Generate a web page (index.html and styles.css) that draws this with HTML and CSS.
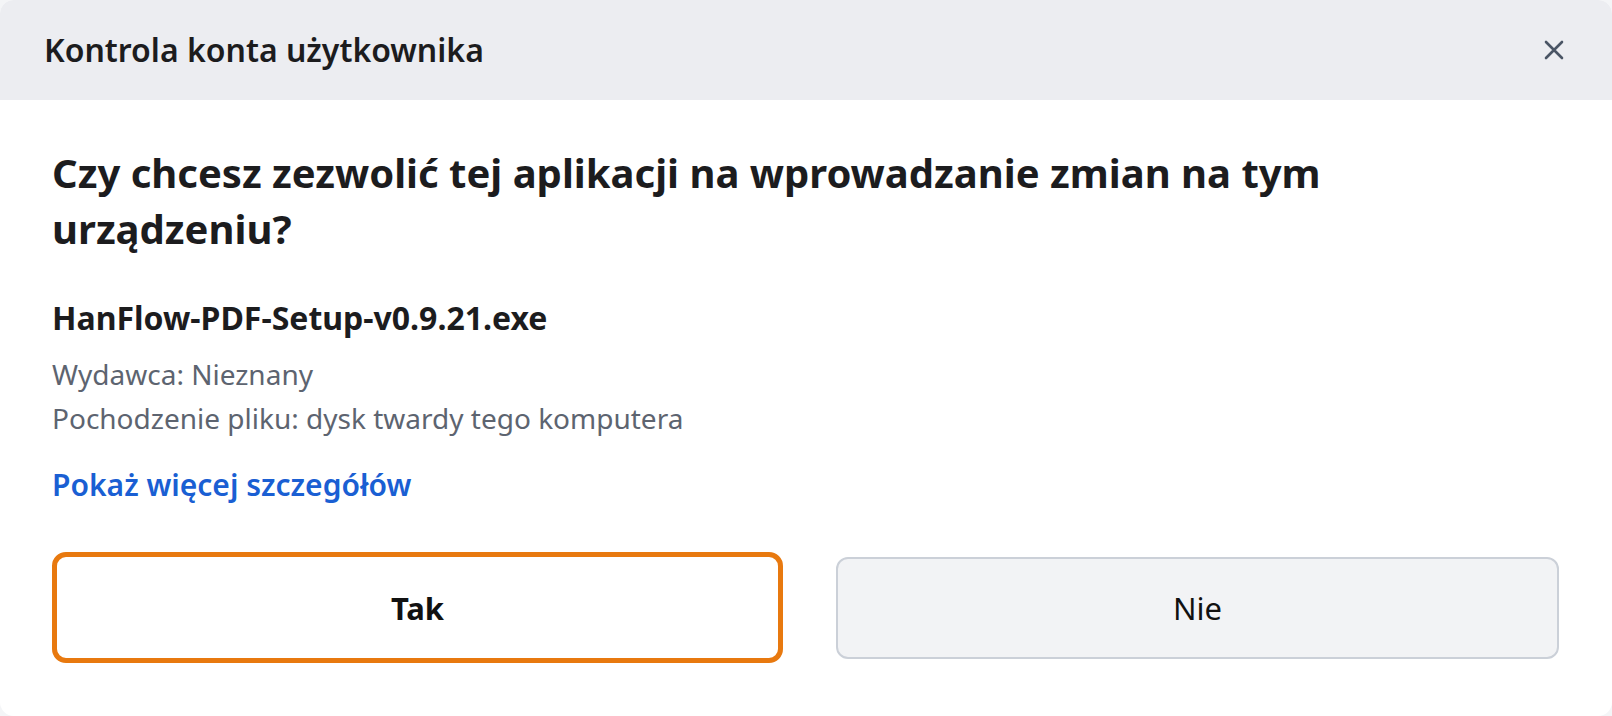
FILE: index.html
```html
<!DOCTYPE html>
<html lang="pl">
<head>
<meta charset="utf-8">
<title>Kontrola konta użytkownika</title>
<link rel="stylesheet" href="styles.css">
</head>
<body>
<div class="dialog">
  <header class="dialog-header">
    <h1 class="dialog-title">Kontrola konta użytkownika</h1>
    <button class="close-btn" aria-label="Zamknij">
      <svg width="20" height="20" viewBox="0 0 20 20"><path d="M2 2 L18 18 M18 2 L2 18" stroke="#4a5565" stroke-width="2.6" stroke-linecap="round" fill="none"/></svg>
    </button>
  </header>
  <main class="dialog-body">
    <h2 class="question">Czy chcesz zezwolić tej aplikacji na wprowadzanie zmian na tym urządzeniu?</h2>
    <div class="file-name">HanFlow-PDF-Setup-v0.9.21.exe</div>
    <div class="meta">
      <div>Wydawca: Nieznany</div>
      <div>Pochodzenie pliku: dysk twardy tego komputera</div>
    </div>
    <a class="details-link" href="#">Pokaż więcej szczegółów</a>
    <div class="actions">
      <button class="btn btn-yes">Tak</button>
      <button class="btn btn-no">Nie</button>
    </div>
  </main>
</div>
</body>
</html>
```

FILE: styles.css
```css
* { box-sizing: border-box; }
html, body { margin: 0; padding: 0; }
body {
  background: #f4f5f7;
  font-family: "Noto Sans", "Open Sans", sans-serif;
  color: #1c1c1e;
}
.dialog {
  width: 1612px;
  height: 716px;
  background: #ffffff;
  border-radius: 14px;
  overflow: hidden;
  display: flex;
  flex-direction: column;
}
.dialog-header {
  height: 100px;
  flex: 0 0 100px;
  background: #ecedf1;
  display: flex;
  align-items: center;
  justify-content: space-between;
  padding: 0 48px 0 44px;
}
.dialog-title {
  margin: 0;
  font-size: 32px;
  font-weight: 600;
  line-height: 44px;
  color: #1c1c1e;
}
.close-btn {
  background: none;
  border: 0;
  padding: 0;
  width: 20px;
  height: 20px;
  display: flex;
  cursor: pointer;
}
.dialog-body {
  padding: 45px 53px 0 52px;
  display: flex;
  flex-direction: column;
}
.question {
  margin: 0;
  max-width: 1360px;
  font-size: 40px;
  font-weight: 700;
  line-height: 56px;
  color: #1c1c1e;
}
.file-name {
  margin-top: 39px;
  font-size: 32px;
  font-weight: 700;
  line-height: 44px;
}
.meta {
  margin-top: 12px;
  font-size: 28px;
  line-height: 44px;
  color: #5d6470;
}
.details-link {
  margin-top: 25px;
  font-size: 30px;
  font-weight: 600;
  line-height: 40px;
  color: #1a5fd3;
  text-decoration: none;
  align-self: flex-start;
}
.actions {
  margin-top: 47px;
  display: flex;
  align-items: center;
  gap: 53px;
}
.btn {
  font-family: inherit;
  font-size: 31px;
  color: #111;
  border-radius: 14px;
  cursor: pointer;
}
.btn-yes {
  flex: 0 0 731px;
  height: 111px;
  background: #ffffff;
  border: 5px solid #e8790f;
  font-weight: 700;
}
.btn-no {
  flex: 0 0 723px;
  height: 102px;
  background: #f2f3f5;
  border: 2px solid #cbd0d8;
  border-radius: 12px;
  font-weight: 400;
}
```
